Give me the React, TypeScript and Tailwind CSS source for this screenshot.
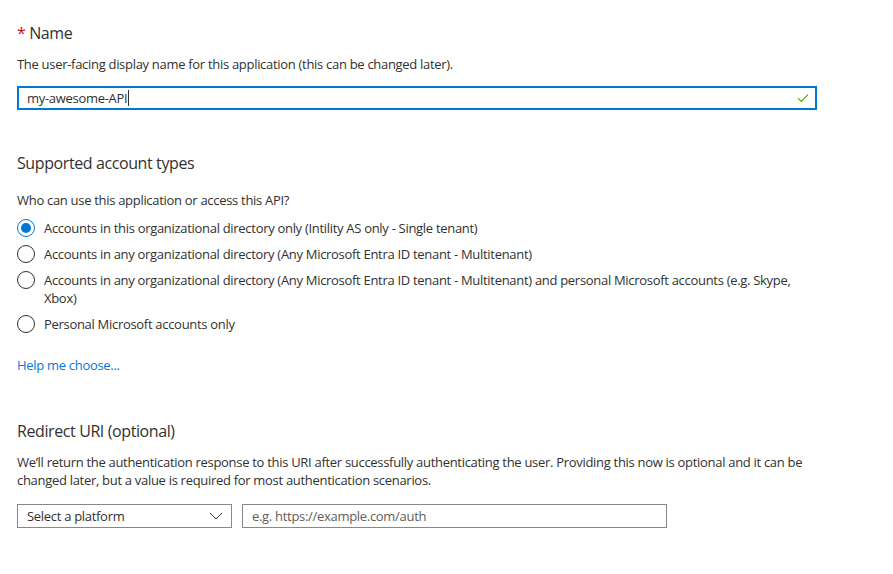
import React from "react"

const font = { fontFamily: '"Open Sans", "Noto Sans", sans-serif' }

const options = [
    { label: "Accounts in this organizational directory only (Intility AS only - Single tenant)", checked: true },
    { label: "Accounts in any organizational directory (Any Microsoft Entra ID tenant - Multitenant)", checked: false },
    {
        label: "Accounts in any organizational directory (Any Microsoft Entra ID tenant - Multitenant) and personal Microsoft accounts (e.g. Skype, Xbox)",
        checked: false,
    },
    { label: "Personal Microsoft accounts only", checked: false },
]

function Radio({ checked }: { checked: boolean }) {
    return (
        <span
            className={
                checked
                    ? "flex h-[18px] w-[18px] shrink-0 items-center justify-center rounded-full border border-[#0078d4] bg-white"
                    : "flex h-[18px] w-[18px] shrink-0 items-center justify-center rounded-full border border-[#323130] bg-white"
            }
        >
            {checked && <span className="h-[10px] w-[10px] rounded-full bg-[#0078d4]" />}
        </span>
    )
}

export default function App() {
    return (
        <div className="min-h-[574px] w-[893px] bg-white text-[#323130]" style={font}>
            <div className="w-[817px] pl-[17px] pt-[22px] text-[13px] leading-[18px] tracking-[-0.3px]">
                {/* Name */}
                <div className="h-[22px] text-[16px] leading-[22px] tracking-[-0.4px]">
                    <span className="text-[#c50f1f]">*</span> Name
                </div>
                <p className="mt-[11px]">The user-facing display name for this application (this can be changed later).</p>
                <div className="mt-[13px] flex h-[24px] items-center border-2 border-[#0078d4] pl-[8px] pr-[6px]">
                    <span>my-awesome-API</span>
                    <span className="ml-[1px] h-[16px] w-px bg-[#323130]" />
                    <span className="flex-1" />
                    <svg width="12" height="10" viewBox="0 0 12 10" fill="none">
                        <path d="M1 5.2 L4.3 8.4 L11 1.6" stroke="#57a300" strokeWidth="1.1" />
                    </svg>
                </div>

                {/* Supported account types */}
                <div className="mt-[42px] h-[22px] text-[16px] leading-[22px] tracking-[-0.4px]">Supported account types</div>
                <p className="mt-[17px]">Who can use this application or access this API?</p>
                <div className="mt-[10px] flex flex-col gap-[8px]">
                    {options.map((o) => (
                        <label key={o.label} className="flex items-start gap-[9px]">
                            <Radio checked={o.checked} />
                            <span>{o.label}</span>
                        </label>
                    ))}
                </div>
                <a className="mt-[23px] block text-[#0078d4]">Help me choose...</a>

                {/* Redirect URI */}
                <div className="mt-[46px] h-[22px] text-[16px] leading-[22px] tracking-[-0.4px]">Redirect URI (optional)</div>
                <p className="mt-[11px]">
                    We’ll return the authentication response to this URI after successfully authenticating the user. Providing this now is
                    optional and it can be changed later, but a value is required for most authentication scenarios.
                </p>
                <div className="mt-[15px] flex gap-[10px]">
                    <div className="flex h-[24px] w-[215px] items-center justify-between border border-[#8a8886] pl-[9px] pr-[8px]">
                        <span>Select a platform</span>
                        <svg width="14" height="8" viewBox="0 0 14 8" fill="none">
                            <path d="M1 1 L7 7 L13 1" stroke="#323130" strokeWidth="1" />
                        </svg>
                    </div>
                    <div className="flex h-[24px] w-[425px] items-center border border-[#8a8886] pl-[9px] text-[#605e5c]">
                        e.g. https://example.com/auth
                    </div>
                </div>
            </div>
        </div>
    )
}
